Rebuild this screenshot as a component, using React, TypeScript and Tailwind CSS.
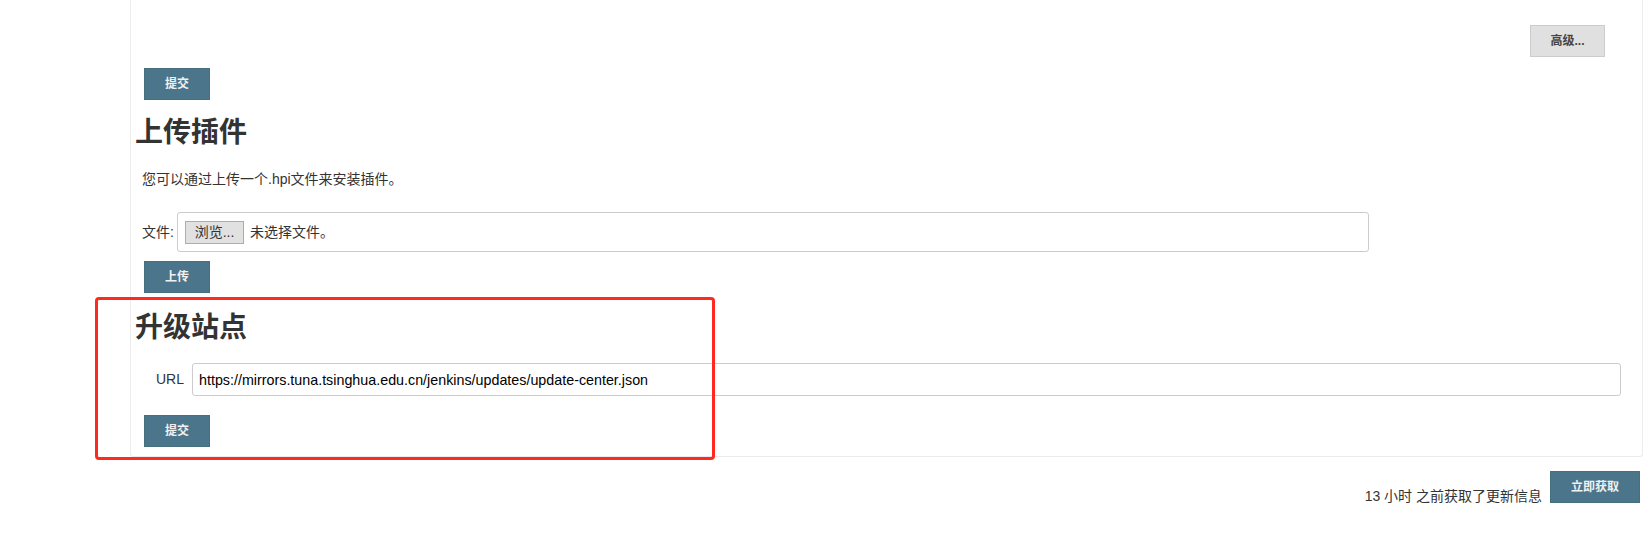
import React from 'react'

const font = { fontFamily: '"Liberation Sans", "Noto Sans CJK SC", sans-serif' }

function BlueButton({ label, className = '' }: { label: string; className?: string }) {
  return (
    <button
      type="button"
      className={`flex h-[32px] w-[66px] items-center justify-center border border-[#47707f] bg-[#4b758b] text-[12px] font-bold text-[#f0f0f0] ${className}`}
    >
      {label}
    </button>
  )
}

export default function App() {
  return (
    <div className="relative h-[534px] w-[1650px] overflow-hidden bg-white text-[#333]" style={font}>
      {/* plugin manager "advanced" panel */}
      <div className="ml-[130px] flex w-[1513px] flex-col rounded-b-[3px] border-x border-b border-[#ececec] pb-[9px]">
        <div className="flex justify-end pr-[37px] pt-[25px]">
          <button
            type="button"
            className="flex h-[32px] w-[75px] items-center justify-center border border-[#ccc] bg-[#e0e0e0] text-[12px] font-bold text-[#444]"
          >
            高级...
          </button>
        </div>

        <BlueButton label="提交" className="ml-[13px] mt-[11px] h-[31px]" />

        <h2 className="ml-[4px] mt-[17px] text-[28px] font-bold leading-[32px]">上传插件</h2>
        <p className="ml-[11px] mt-[20px] text-[14px] leading-[20px]">您可以通过上传一个.hpi文件来安装插件。</p>

        <div className="ml-[11px] mt-[23px] flex items-center text-[14px]">
          <span className="w-[35px]">文件:</span>
          <div className="flex h-[40px] w-[1192px] items-center rounded-[3px] border border-[#ccc] pl-[7px]">
            <span className="flex h-[23px] w-[59px] items-center justify-center border border-[#adadad] bg-[#e1e1e1]">
              浏览...
            </span>
            <span className="ml-[6px]">未选择文件。</span>
          </div>
        </div>

        <BlueButton label="上传" className="ml-[13px] mt-[9px]" />

        <h2 className="ml-[4px] mt-[19px] text-[28px] font-bold leading-[32px]">升级站点</h2>

        <div className="ml-[25px] mt-[19px] flex items-center text-[14px]">
          <span className="w-[36px]">URL</span>
          <input
            readOnly
            value="https://mirrors.tuna.tsinghua.edu.cn/jenkins/updates/update-center.json"
            className="h-[33px] w-[1429px] rounded-[3px] border border-[#ccc] px-[6px] text-[14.3px] text-black outline-none"
            style={font}
          />
        </div>

        <BlueButton label="提交" className="ml-[13px] mt-[19px]" />
      </div>

      <div className="mt-[14px] flex items-end justify-end gap-[8px] pr-[10px]">
        <span className="text-[14px] leading-[14px]">13 小时 之前获取了更新信息</span>
        <button
          type="button"
          className="flex h-[32px] w-[90px] items-center justify-center border border-[#47707f] bg-[#4b758b] text-[12px] font-bold text-[#f0f0f0]"
        >
          立即获取
        </button>
      </div>

      {/* red highlight drawn over the update-site section */}
      <div className="pointer-events-none absolute left-[95px] top-[297px] h-[163px] w-[620px] rounded-[4px] border-[3px] border-[#ff2a1f]" />
    </div>
  )
}
